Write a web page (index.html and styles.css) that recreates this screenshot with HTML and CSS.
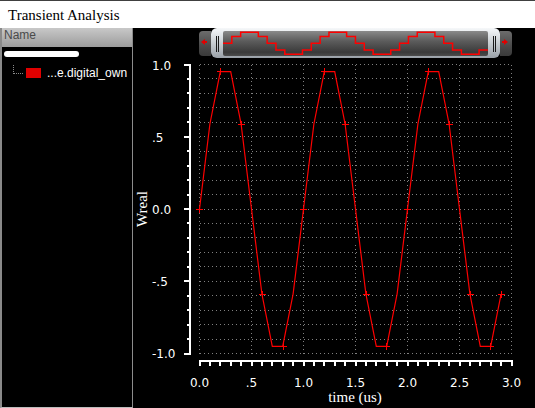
FILE: index.html
```html
<!DOCTYPE html>
<html>
<head>
	<meta name="viewport" content="width=device-width, initial-scale=1">
	<link rel="stylesheet" href="styles.css">
</head>
<body>
	<div class="window">
		<div class="titlebar">Transient Analysis</div>
		<div class="main">
			<div class="sidebar">
				<div class="sidebar-header">Name</div>
				<div class="tree-root"></div>
				<div class="tree-item">
					<span class="tree-branch"></span>
					<span class="swatch"></span>
					<span class="tree-label">...e.digital_own</span>
				</div>
			</div>
			<div class="plot-panel">
				<div class="scroller">
					<div class="scroll-btn left">
						<svg width="12" height="25"><path d="M8 10H6V8L2 11L6 14V12H8Z" fill="#e00000"/></svg>
					</div>
					<div class="thumb">
						<div class="grip"><span></span><span></span></div>
						<div class="track">
							<svg width="265" height="25">
								<path d="M0 12.3H8.83V5.5H17.66V1.3H35.32V5.5H44.15V12.3H52.98V19.1H61.81V23.3H79.47V19.1H88.3V12.3H97.13V5.5H105.96V1.3H123.62V5.5H132.45V12.3H141.28V19.1H150.11V23.3H167.77V19.1H176.6V12.3H185.43V5.5H194.26V1.3H211.92V5.5H220.75V12.3H229.58V19.1H238.41V23.3H256.07V19.1H264.9" fill="none" stroke="#ff0000" stroke-width="1.5"/>
							</svg>
						</div>
						<div class="grip"><span></span><span></span></div>
					</div>
					<div class="scroll-btn right">
						<svg width="12" height="25"><path d="M2 10H4V8L8 11L4 14V12H2Z" fill="#e00000"/></svg>
					</div>
				</div>
				<svg class="plot" width="402" height="349" viewBox="133 59 402 349">
					<!-- grid -->
					<g stroke="#808080" stroke-width="1" stroke-dasharray="1 3" shape-rendering="crispEdges" fill="none">
						<path d="M199.5 64.5H512M199.5 78.95H512M199.5 93.4H512M199.5 107.85H512M199.5 122.3H512M199.5 136.75H512M199.5 151.2H512M199.5 165.65H512M199.5 180.1H512M199.5 194.55H512M199.5 209H512M199.5 223.45H512M199.5 237.9H512M199.5 252.35H512M199.5 266.8H512M199.5 281.25H512M199.5 295.7H512M199.5 310.15H512M199.5 324.6H512M199.5 339.05H512M199.5 353.5H512"/>
						<path d="M199.5 64.5V354M251.5 64.5V354M303.5 64.5V354M355.5 64.5V354M407.5 64.5V354M459.5 64.5V354M511.5 64.5V354"/>
					</g>
					<!-- axes -->
					<g stroke="#ffffff" stroke-width="2" shape-rendering="crispEdges" fill="none">
						<path d="M190 64V355"/>
						<path d="M184 64.5H190M186.5 78.95H190M186.5 93.4H190M186.5 107.85H190M186.5 122.3H190M184 136.75H190M186.5 151.2H190M186.5 165.65H190M186.5 180.1H190M186.5 194.55H190M184 209H190M186.5 223.45H190M186.5 237.9H190M186.5 252.35H190M186.5 266.8H190M184 281.25H190M186.5 295.7H190M186.5 310.15H190M186.5 324.6H190M186.5 339.05H190M184 353.5H190"/>
						<path d="M199 361H513"/>
						<path d="M199.5 361V366M209.9 361V366M220.3 361V366M230.7 361V366M241.1 361V366M251.5 361V366M261.9 361V366M272.3 361V366M282.7 361V366M293.1 361V366M303.5 361V366M313.9 361V366M324.3 361V366M334.7 361V366M345.1 361V366M355.5 361V366M365.9 361V366M376.3 361V366M386.7 361V366M397.1 361V366M407.5 361V366M417.9 361V366M428.3 361V366M438.7 361V366M449.1 361V366M459.5 361V366M469.9 361V366M480.3 361V366M490.7 361V366M501.1 361V366M511.5 361V366"/>
					</g>
					<g class="tick-label">
						<text x="152" y="70">1.0</text>
						<text x="152" y="142">.5</text>
						<text x="152" y="214">0.0</text>
						<text x="152" y="286">-.5</text>
						<text x="152" y="358">-1.0</text>
					</g>
					<g class="tick-label" text-anchor="middle">
						<text x="199.5" y="387">0.0</text>
						<text x="251.5" y="387">.5</text>
						<text x="303.5" y="387">1.0</text>
						<text x="355.5" y="387">1.5</text>
						<text x="407.5" y="387">2.0</text>
						<text x="459.5" y="387">2.5</text>
						<text x="511.5" y="387">3.0</text>
					</g>
					<text class="axis-title" x="355" y="402" text-anchor="middle">time (us)</text>
					<text class="axis-title" transform="translate(147 209) rotate(-90)" text-anchor="middle">Wreal</text>
					<!-- signal -->
					<polyline fill="none" stroke="#ff0000" stroke-width="1.2" points="199.5,209 209.9,124 220.3,71.6 230.7,71.6 241.1,124 251.5,209 261.9,294 272.3,346.4 282.7,346.4 293.1,294 303.5,209 313.9,124 324.3,71.6 334.7,71.6 345.1,124 355.5,209 365.9,294 376.3,346.4 386.7,346.4 397.1,294 407.5,209 417.9,124 428.3,71.6 438.7,71.6 449.1,124 459.5,209 469.9,294 480.3,346.4 490.7,346.4 501.1,294"/>
					<path fill="none" stroke="#ff0000" stroke-width="1" shape-rendering="crispEdges" d="M196 209.5h7M199.5 206v7M216.5 71.5h7M220.5 68v7M237.5 124.5h7M241.5 121v7M258.5 294.5h7M262.5 291v7M279.5 346.5h7M283.5 343v7M300 209.5h7M303.5 206v7M320.5 71.5h7M324.5 68v7M341.5 124.5h7M345.5 121v7M362.5 294.5h7M366.5 291v7M383 346.5h7M386.5 343v7M404 209.5h7M407.5 206v7M424.5 71.5h7M428.5 68v7M445.5 124.5h7M449.5 121v7M466.5 294.5h7M470.5 291v7M487 346.5h7M490.5 343v7M497.5 294.5h7M501.5 291v7"/>
				</svg>
			</div>
		</div>
	</div>
</body>
</html>
```

FILE: styles.css
```css
body {
	margin: 0;
	background-color: #000;
	font-family: "Liberation Sans", Arial, sans-serif;
}

.window {
	width: 535px;
	height: 408px;
	display: flex;
	flex-direction: column;
	overflow: hidden;
}

.titlebar {
	height: 27px;
	border-top: 1px solid #404040;
	background-color: #fff;
	color: #000;
	font-family: "Liberation Serif", "Times New Roman", serif;
	font-size: 15px;
	line-height: 28px;
	padding-left: 8px;
	overflow: hidden;
}

.main {
	flex: 1;
	display: flex;
	min-height: 0;
}

/* left tree */
.sidebar {
	width: 133px;
	box-sizing: border-box;
	border-left: 2px solid #8a8a8a;
	border-right: 1px solid #8c8c8c;
	border-bottom: 1px solid #bdbdbd;
	background-color: #000;
}

.sidebar-header {
	height: 19px;
	padding-left: 2px;
	background: linear-gradient(#c8c8c8, #9c9c9c);
	color: #4a4a4a;
	font-size: 12px;
	line-height: 15px;
}

.tree-root {
	width: 75px;
	height: 6px;
	margin: 4px 0 0 2px;
	border-radius: 3px;
	background-color: #fff;
}

.tree-item {
	display: flex;
	align-items: flex-start;
	height: 16px;
	margin-top: 8px;
	padding-left: 11px;
}

.tree-branch {
	width: 10px;
	height: 9px;
	box-sizing: border-box;
	border-left: 1px dotted #8a8a8a;
	border-bottom: 1px dotted #8a8a8a;
}

.swatch {
	width: 15px;
	height: 10px;
	margin: 3px 0 0 3px;
	background-color: #e00000;
}

.tree-label {
	margin-left: 6px;
	color: #fff;
	font-size: 12px;
	line-height: 16px;
	white-space: nowrap;
}

/* plot side */
.plot-panel {
	flex: 1;
	display: flex;
	flex-direction: column;
}

.scroller {
	height: 31px;
	box-sizing: border-box;
	display: flex;
	align-items: flex-start;
	padding-left: 66px;
}

.scroll-btn {
	width: 12px;
	height: 25px;
	margin-top: 3px;
	background: linear-gradient(#6c6c6c, #4a4a4a 60%, #3a3a3a);
}

.scroll-btn svg {
	display: block;
}

.scroll-btn.left {
	border-radius: 4px 0 0 4px;
}

.scroll-btn.right {
	border-radius: 0 4px 4px 0;
}

.thumb {
	width: 289px;
	height: 30px;
	box-sizing: border-box;
	padding: 3px 0 2px;
	display: flex;
	border-radius: 6px;
	background: linear-gradient(#f6f8fa, #cdd2d6 45%, #9aa1a8);
}

.grip {
	width: 12px;
	display: flex;
	justify-content: center;
	align-items: center;
	gap: 1px;
}

.grip span {
	width: 1px;
	height: 16px;
	background-color: #1a1a1a;
}

.track {
	flex: 1;
	border-radius: 2px;
	background: linear-gradient(#8a8a8a, #5c5c5c 40%, #3a3a3a 85%, #4c4c4c);
}

.track svg {
	display: block;
}

.plot {
	display: block;
}

.tick-label {
	fill: #fff;
	font-family: "DejaVu Sans", sans-serif;
	font-size: 12px;
}

.axis-title {
	fill: #fff;
	font-family: "Liberation Serif", "Times New Roman", serif;
	font-size: 15px;
}
```
